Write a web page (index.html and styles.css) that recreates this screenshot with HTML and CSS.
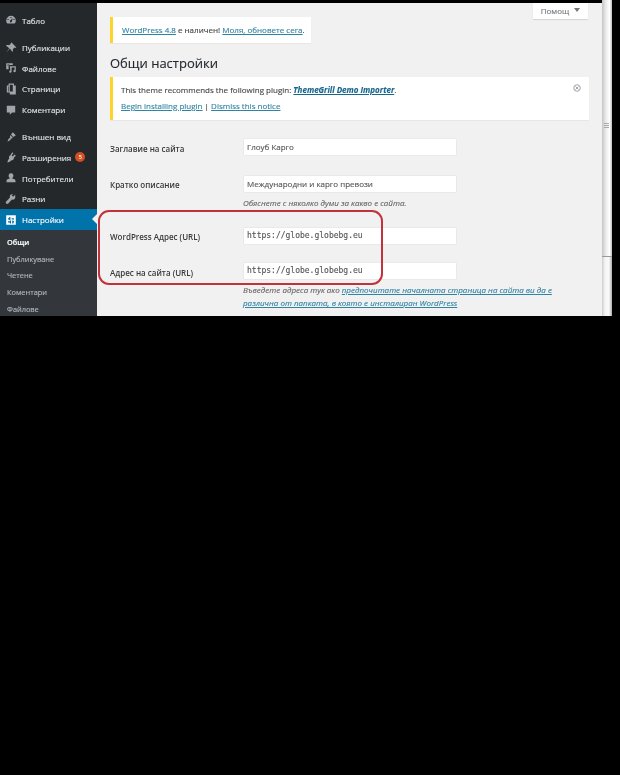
FILE: index.html
```html
<!DOCTYPE html>
<html lang="bg">
<head>
    <meta charset="UTF-8">
    <title>Общи настройки</title>
    <link rel="stylesheet" href="styles.css">
</head>
<body>
    <div class="window">
        <nav class="sidebar">
            <ul class="menu">
                <li class="menu-item gap-after">
                    <svg class="icon" viewBox="0 0 20 20"><path d="M10 3a8 8 0 0 0-8 8c0 2 .7 3.800 2 5h12c1.300-1.200 2-3 2-5a8 8 0 0 0-8-8zm0 2a1 1 0 1 1 0 2 1 1 0 0 1 0-2zM5 10a1 1 0 1 1 0-2 1 1 0 0 1 0 2zm10 0a1 1 0 1 1 0-2 1 1 0 0 1 0 2zm-5 4a2 2 0 0 1-1-3.700L13 7l-1.500 5A2 2 0 0 1 10 14z"/></svg>
                    Табло
                </li>
                <li class="menu-item">
                    <svg class="icon" viewBox="0 0 20 20"><path d="M11 1l8 8-2 1-1-1-3 3c.5 2 .2 3.500-.5 4.500L8 11l-6 7 5-7.500L1.500 6C3 5 5 5 7 5.500l3-3-.5-1z"/></svg>
                    Публикации
                </li>
                <li class="menu-item">
                    <svg class="icon" viewBox="0 0 20 20"><path d="M2 2h11v3H6v7H2zm2 2v2h3V4zM8 7h10v8a2 2 0 1 1-2-2V9h-5v7a2 2 0 1 1-2-2z"/></svg>
                    Файлове
                </li>
                <li class="menu-item">
                    <svg class="icon" viewBox="0 0 20 20"><path d="M6 1h9v3h3v15H8v-3H3V4h3zm2 2v11h5V3zm-3 3v8h1V6z"/></svg>
                    Страници
                </li>
                <li class="menu-item gap-after">
                    <svg class="icon" viewBox="0 0 20 20"><path d="M3 3h14v11h-5l-4 4v-4H3z"/></svg>
                    Коментари
                </li>
                <li class="menu-item">
                    <svg class="icon" viewBox="0 0 20 20"><path d="M13 2l5 5-4 3-4-4zM9 7l4 4-2 2-1-1-1 3-5 3 2-5 3-2-1-2z"/></svg>
                    Външен вид
                </li>
                <li class="menu-item">
                    <svg class="icon" viewBox="0 0 20 20"><path d="M12 2l2 2-3 3 2 2 3-3 2 2-3 3c0 3-2 5-5 5l-2 2-4 1 1-4 2-2c-1-3 0-5 2-6z"/></svg>
                    Разширения
                    <span class="badge">5</span>
                </li>
                <li class="menu-item">
                    <svg class="icon" viewBox="0 0 20 20"><path d="M10 2a4 4 0 0 1 4 4c0 2-1 4-2.500 4.500L16 12c1 .5 1.500 1.500 1.500 3v2h-15v-2c0-1.500.5-2.500 1.500-3l4.500-1.500C7 10 6 8 6 6a4 4 0 0 1 4-4z"/></svg>
                    Потребители
                </li>
                <li class="menu-item">
                    <svg class="icon" viewBox="0 0 20 20"><path d="M17 3l-3 3-2-1-1-2 3-1c-3-1-6 1-6 4l.3 1.500L2 14c-1 1-1 2.500 0 3.500s2.500 1 3.500 0l6-6.500C15 12 18 9 17 5z"/></svg>
                    Разни
                </li>
                <li class="menu-item current">
                    <svg class="icon" viewBox="0 0 20 20"><path fill-rule="evenodd" d="M2 2h16v16H2zM7 5v2H5v2h2v1h2V5zm4 2v2h4V7zm-6 5v2h3v2h2v-5H8v1zm7-1v5h2v-2h1v-2h-1v-1z"/></svg>
                    Настройки
                </li>
            </ul>
            <ul class="submenu">
                <li class="sub-active">Общи</li>
                <li>Публикуване</li>
                <li>Четене</li>
                <li>Коментари</li>
                <li>Файлове</li>
            </ul>
        </nav>

        <main class="content">
            <button class="help-tab">Помощ <span class="arrow"></span></button>

            <div class="notice update-nag">
                <a href="#">WordPress 4.8</a> е наличен! <a href="#">Моля, обновете сега</a>.
            </div>

            <h1>Общи настройки</h1>

            <div class="notice plugin-notice">
                <svg class="dismiss" viewBox="0 0 16 16"><circle cx="8" cy="8" r="6.500"/><path d="M5 5l6 6M11 5l-6 6"/></svg>
                <p>This theme recommends the following plugin: <a href="#" class="strong-link">ThemeGrill Demo Importer</a>.</p>
                <p><a href="#">Begin installing plugin</a> | <a href="#">Dismiss this notice</a></p>
            </div>

            <div class="form-row row-title">
                <label>Заглавие на сайта</label>
                <div class="field"><div class="input">Глоуб Карго</div></div>
            </div>
            <div class="form-row row-tagline">
                <label>Кратко описание</label>
                <div class="field">
                    <div class="input">Международни и карго превози</div>
                    <p class="desc">Обяснете с няколко думи за какво е сайта.</p>
                </div>
            </div>
            <div class="form-row row-wp">
                <label>WordPress Адрес (URL)</label>
                <div class="field"><div class="input mono">https://globe.globebg.eu</div></div>
            </div>
            <div class="form-row row-site">
                <label>Адрес на сайта (URL)</label>
                <div class="field">
                    <div class="input mono">https://globe.globebg.eu</div>
                    <p class="desc">Въведете адреса тук ако <a href="#">предпочитате началната страница на сайта ви да е различна от папката, в която е инсталиран WordPress</a></p>
                </div>
            </div>

            <div class="highlight"></div>
        </main>

        <div class="scrollbar"><div class="thumb"><span class="grip"></span></div></div>
    </div>
</body>
</html>
```

FILE: styles.css
```css
html, body {
    margin: 0;
    padding: 0;
    height: 775px;
    background-color: #000;
    overflow: hidden;
}

body {
    font-family: "Open Sans", "Noto Sans", sans-serif;
    font-size: 8px;
    color: #444;
    -webkit-text-stroke: 0.12px;
}

/* the reference is a soft, rescaled screenshot */
.window {
    display: flex;
    height: 313px;
    padding-top: 3px;
    filter: blur(0.3px);
}

/* sidebar */
.sidebar {
    width: 97px;
    flex-shrink: 0;
    background-color: #25282b;
    overflow: hidden;
    padding-top: 7px;
    box-sizing: border-box;
}

.menu, .submenu {
    list-style: none;
    margin: 0;
    padding: 0;
}

.menu-item {
    display: flex;
    align-items: center;
    height: 20.7px;
    padding-left: 5px;
    color: #e4e4e4;
    font-size: 8px;
    position: relative;
}

.gap-after {
    margin-bottom: 6.500px;
}

.icon {
    width: 12px;
    height: 12px;
    fill: #a0a5aa;
    margin-right: 5px;
    flex-shrink: 0;
}

.badge {
    width: 10px;
    height: 10px;
    line-height: 10px;
    border-radius: 50%;
    background-color: #d54e21;
    color: #fff;
    font-size: 6px;
    text-align: center;
    margin-left: 4px;
}

.current {
    background-color: #0073aa;
    color: #fff;
}

.current .icon {
    fill: #fff;
}

.current::after {
    content: "";
    position: absolute;
    right: 0;
    top: 5px;
    border: 5px solid transparent;
    border-right-color: #f1f1f1;
    border-left: 0;
}

.submenu {
    background-color: #33373b;
    padding-top: 4px;
    height: 120px;
}

.submenu li {
    height: 16.800px;
    line-height: 16.800px;
    padding-left: 7px;
    font-size: 7.400px;
    color: #b4b9be;
}

.submenu .sub-active {
    color: #fff;
    font-weight: 600;
}

/* main part */
.content {
    position: relative;
    width: 505px;
    flex-shrink: 0;
    background-color: #f1f1f1;
    overflow: hidden;
    padding: 14px 13px 0;
    box-sizing: border-box;
}

.help-tab {
    position: absolute;
    top: 0;
    right: 14px;
    width: 55px;
    height: 16px;
    border: 0;
    padding: 0 0 2px;
    background-color: #fff;
    box-shadow: 0 1px 1px rgba(0,0,0,0.1);
    font-family: inherit;
    font-size: 8px;
    color: #72777c;
}

.arrow {
    display: inline-block;
    margin-left: 3px;
    vertical-align: 2px;
    border-top: 4px solid #72777c;
    border-left: 3px solid transparent;
    border-right: 3px solid transparent;
}

.notice {
    background-color: #fff;
    border-left: 3px solid #ffd42a;
    box-shadow: 0 1px 1px rgba(0,0,0,0.04);
    box-sizing: border-box;
}

.notice a {
    color: #2f83a3;
}

.update-nag {
    width: 201px;
    height: 26px;
    line-height: 26px;
    padding-left: 9px;
}

h1 {
    margin: 9px 0 0;
    font-size: 13px;
    line-height: 22px;
    font-weight: 400;
    color: #23282d;
}

.plugin-notice {
    position: relative;
    width: 479px;
    height: 43px;
    margin-top: 3px;
    padding: 6px 0 0 8px;
}

.plugin-notice p {
    margin: 0 0 3px;
    line-height: 13px;
}

.notice .strong-link {
    font-weight: 700;
    font-style: italic;
    color: #17668d;
}

.dismiss {
    position: absolute;
    top: 7px;
    right: 8px;
    width: 8px;
    height: 8px;
    fill: none;
    stroke: #a0a5aa;
    stroke-width: 2;
}

.form-row {
    display: flex;
    align-items: flex-start;
}

.form-row label {
    width: 134px;
    flex-shrink: 0;
    color: #3a3a3a;
    font-weight: 600;
    font-size: 8px;
    line-height: 16px;
    padding-top: 1.500px;
    -webkit-text-stroke: 0;
}

.field {
    width: 212px;
}

.input {
    height: 16px;
    line-height: 15px;
    background-color: #fff;
    box-shadow: 0 0 1px rgba(0,0,0,0.2);
    padding-left: 3px;
    color: #555;
    font-size: 8px;
    white-space: nowrap;
}

.mono {
    font-family: "DejaVu Sans Mono", "Liberation Mono", monospace;
    font-size: 8px;
}

.desc {
    margin: 4px 0 0 -1px;
    width: 340px;
    font-style: italic;
    color: #666;
    font-size: 8px;
    line-height: 13px;
}

.desc a {
    color: #2f83a3;
}

.row-title {
    margin-top: 19px;
}

.row-tagline {
    margin-top: 19px;
}

.row-wp {
    margin-top: 19px;
}

.row-site {
    margin-top: 18px;
}

/* red marker drawn over the screenshot */
.highlight {
    position: absolute;
    left: 1px;
    top: 207px;
    width: 281px;
    height: 71px;
    border: 2.500px solid #c1323a;
    border-radius: 11px;
}

/* scrollbar */
.scrollbar {
    width: 10px;
    flex-shrink: 0;
    margin-top: -3px;
    background: linear-gradient(to right, #ccc, #f4f4f4 30%, #fafafa 70%, #aaa);
}

.thumb {
    height: 257px;
    background: linear-gradient(to right, #c4c4c4, #e8e8e8 35%, #fff 75%, #bbb);
    border-bottom: 1px solid #999;
    box-sizing: border-box;
    position: relative;
}

.grip {
    position: absolute;
    left: 2px;
    right: 3px;
    top: 123px;
    height: 5px;
    background: repeating-linear-gradient(to bottom, #aaa 0, #aaa 1px, transparent 1px, transparent 2px);
}
```
